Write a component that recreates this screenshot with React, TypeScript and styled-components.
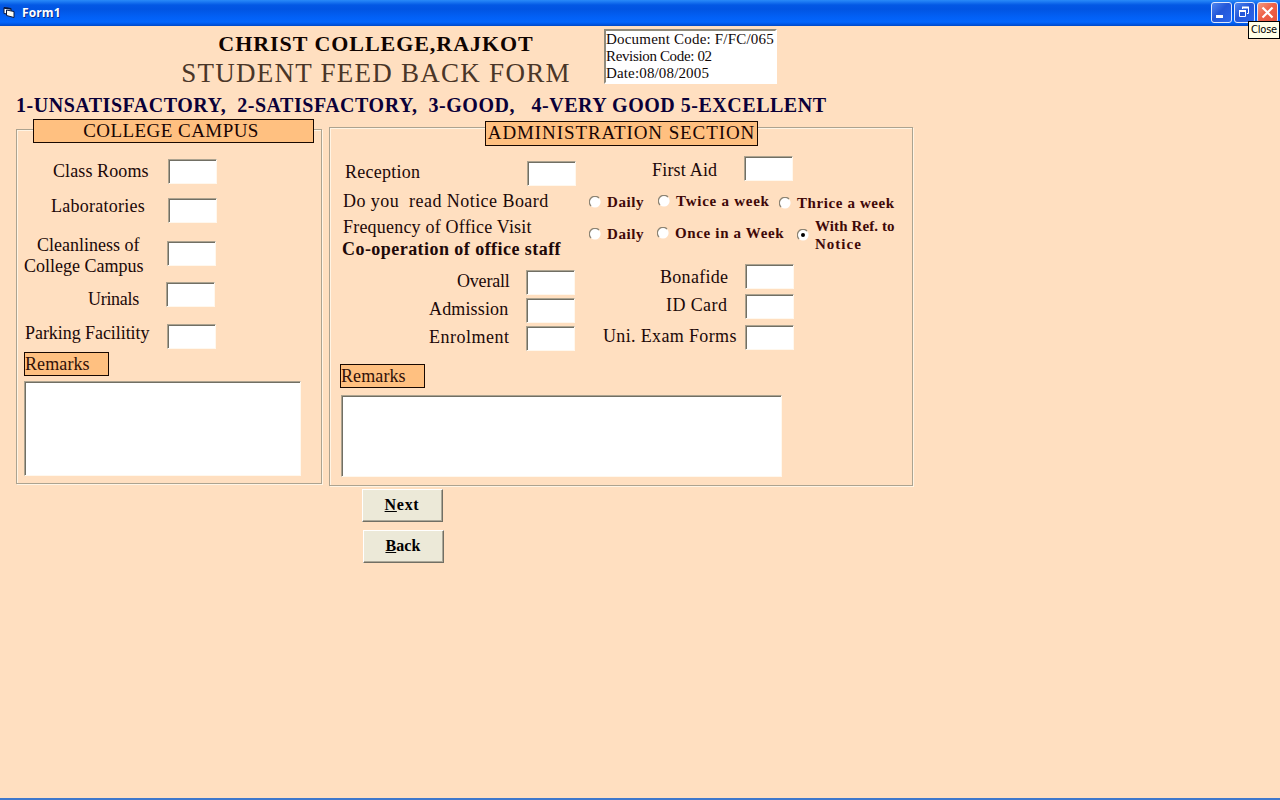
import React from "react";
import styled, { createGlobalStyle } from "styled-components";

const Global = createGlobalStyle`
  * { box-sizing: border-box; }
  body { margin: 0; background: #ffdfc0; font-family: "Liberation Serif", "Times New Roman", serif; }
`;

const Window = styled.div`
  width: 1280px;
  height: 800px;
  overflow: hidden;
  display: flex;
  flex-direction: column;
  background: #ffdfc0;
  border-bottom: 2px solid #3f78cc;
`;

const TitleBar = styled.header`
  position: relative;
  flex: none;
  height: 26px;
  display: flex;
  align-items: flex-start;
  padding: 2px 2px 0 3px;
  background: linear-gradient(#2a8af8 0, #1a77f2 2px, #0358e4 5px, #0154e2 9px, #0260f6 17px, #0366fd 22px, #0058e8 24px, #0048c4 26px);
`;

const AppIcon = styled.svg`
  margin-top: 4px;
`;

const Caption = styled.span`
  flex: 1;
  margin-left: 5px;
  font: bold 12px/22px "Open Sans", sans-serif;
  letter-spacing: 0.1px;
  color: #fff;
  text-shadow: 1px 1px 0 #0a2f8c;
`;

const WindowButtons = styled.div`
  display: flex;
  gap: 2px;
`;

const WindowButton = styled.button<{ $danger?: boolean }>`
  width: 21px;
  height: 21px;
  padding: 0;
  display: flex;
  border: 1px solid #dfe8fb;
  border-radius: 3px;
  background: ${(p) =>
    p.$danger
      ? "linear-gradient(135deg, #f09a80, #ee6248 45%, #e5533c)"
      : "linear-gradient(135deg, #4f86f0, #2457d8 45%, #2a66ec)"};
`;

const Tooltip = styled.div`
  position: absolute;
  top: 21px;
  right: 0;
  width: 32px;
  height: 18px;
  border: 1px solid #000;
  background: #ffffe8;
  color: #000;
  font: 11px/16px "DejaVu Sans Condensed", "DejaVu Sans", sans-serif;
  letter-spacing: -0.2px;
  text-align: center;
  white-space: nowrap;
`;

const Header = styled.div`
  flex: none;
  height: 67px;
  display: flex;
  align-items: flex-start;
`;

const Titles = styled.div`
  width: 390px;
  margin: 5px 0 0 181px;
  display: flex;
  flex-direction: column;
  align-items: center;
  white-space: nowrap;
`;

const College = styled.h1`
  margin: 0;
  font-size: 22px;
  line-height: 26px;
  letter-spacing: 0.95px;
  color: #100400;
`;

const FormTitle = styled.h2`
  margin: 1px 0 0;
  font-size: 27px;
  font-weight: 400;
  line-height: 30px;
  letter-spacing: 1.25px;
  color: #4a3628;
`;

const DocumentBox = styled.div`
  width: 173px;
  height: 55px;
  margin: 3px 0 0 33px;
  border: 2px solid;
  border-color: #8f8a7c #fff #fff #8f8a7c;
  background: #fff;
  font-size: 15px;
  line-height: 17px;
  color: #100808;
  white-space: nowrap;
`;

const DocumentLine = styled.div<{ $spacing: number }>`
  letter-spacing: ${(p) => p.$spacing}px;
`;

const Scale = styled.div`
  flex: none;
  height: 24px;
  padding-left: 16px;
  font-size: 20px;
  font-weight: 700;
  line-height: 24px;
  letter-spacing: 0.52px;
  color: #0a0038;
  white-space: pre;
`;

const Panels = styled.main`
  flex: none;
  height: 372px;
  display: flex;
  align-items: flex-start;
  padding-left: 16px;
  gap: 7px;
`;

const Panel = styled.section<{ $w: number; $h: number; $top: number }>`
  width: ${(p) => p.$w}px;
  height: ${(p) => p.$h}px;
  margin-top: ${(p) => p.$top}px;
  border: 1px solid #aca390;
  box-shadow: 1px 1px 0 #fff4e4, inset 1px 1px 0 #fff4e4;
`;

const Legend = styled.h3<{
  $w: number;
  $h: number;
  $x: number;
  $top: number;
  $spacing: number;
  $padRight?: number;
}>`
  width: ${(p) => p.$w}px;
  height: ${(p) => p.$h}px;
  margin: ${(p) => p.$top}px 0 0 ${(p) => p.$x}px;
  padding-right: ${(p) => p.$padRight ?? 0}px;
  border: 1px solid #180800;
  background: #ffc080;
  font-size: 19px;
  font-weight: 400;
  line-height: 21px;
  letter-spacing: ${(p) => p.$spacing}px;
  text-align: center;
  white-space: nowrap;
  color: #180404;
`;

const Row = styled.div<{ $h: number; $top?: number }>`
  display: flex;
  align-items: flex-start;
  height: ${(p) => p.$h}px;
  margin-top: ${(p) => p.$top ?? 0}px;
`;

const Column = styled.div<{ $w: number; $top?: number }>`
  width: ${(p) => p.$w}px;
  padding-top: ${(p) => p.$top ?? 0}px;
`;

const Label = styled.label<{
  $w: number;
  $x: number;
  $dy?: number;
  $spacing?: number;
  $bold?: boolean;
}>`
  flex: none;
  display: block;
  width: ${(p) => p.$w}px;
  padding-left: ${(p) => p.$x}px;
  margin-top: ${(p) => p.$dy ?? 0}px;
  font-size: 18px;
  font-weight: ${(p) => (p.$bold ? 700 : 400)};
  line-height: 20px;
  letter-spacing: ${(p) => p.$spacing ?? 0}px;
  color: #200808;
  white-space: pre;
`;

const LabelLines = styled(Label)`
  line-height: 21px;
`;

const Indent = styled.span<{ $x: number }>`
  display: inline-block;
  padding-left: ${(p) => p.$x}px;
`;

const sunken = `
  padding: 0;
  border: 1px solid;
  border-color: #aca390 #fff8ee #fff8ee #aca390;
  border-radius: 0;
  background: #fff;
  box-shadow: inset 1px 1px 0 #716f64;
  outline: none;
`;

const Field = styled.input<{ $x?: number; $dy?: number }>`
  flex: none;
  display: block;
  width: 49px;
  height: 25px;
  margin: ${(p) => p.$dy ?? 0}px 0 0 ${(p) => p.$x ?? 0}px;
  ${sunken}
`;

const Memo = styled.textarea<{ $w: number; $h: number; $x: number; $top: number }>`
  display: block;
  resize: none;
  width: ${(p) => p.$w}px;
  height: ${(p) => p.$h}px;
  margin: ${(p) => p.$top}px 0 0 ${(p) => p.$x}px;
  ${sunken}
`;

const RemarksTag = styled.div<{ $x: number }>`
  width: 85px;
  height: 24px;
  margin-left: ${(p) => p.$x}px;
  border: 1px solid #180800;
  background: #ffc080;
  font-size: 18px;
  line-height: 22px;
  letter-spacing: 0.1px;
  color: #301008;
`;

const Option = styled.label<{ $dy?: number; $spacing?: number }>`
  flex: none;
  display: flex;
  align-items: center;
  gap: 6px;
  margin-top: ${(p) => p.$dy ?? 0}px;
  font-size: 15px;
  font-weight: 700;
  line-height: 18px;
  letter-spacing: ${(p) => p.$spacing ?? 0.6}px;
  color: #400808;
  white-space: nowrap;
`;

const OptionBox = styled.div<{ $w: number }>`
  width: ${(p) => p.$w}px;
  flex: none;
`;

const Wide = styled.span`
  letter-spacing: 1px;
`;

const Dot = styled.svg`
  flex: none;
`;

const Radio = ({ checked }: { checked?: boolean }) => (
  <Dot width="12" height="12" viewBox="0 0 12 12">
    <circle cx="6" cy="6" r="5.6" fill="#fff" />
    <path d="M2 10A5.6 5.6 0 0 1 10 2" fill="none" stroke="#8c8474" strokeWidth="1.3" />
    {checked && <circle cx="6" cy="6" r="2" fill="#000" />}
  </Dot>
);

const Actions = styled.div`
  display: flex;
  flex-direction: column;
  gap: 8px;
  padding-left: 362px;
`;

const Button = styled.button<{ $x?: number; $spacing: number }>`
  width: 81px;
  height: 33px;
  margin: 0 0 0 ${(p) => p.$x ?? 0}px;
  padding: 0 1px 1px 0;
  border: 1px solid;
  border-color: #fff #716f64 #716f64 #fff;
  box-shadow: inset -1px -1px 0 #aca899;
  background: #ece9d8;
  font: bold 16px/30px "Liberation Serif", "Times New Roman", serif;
  letter-spacing: ${(p) => p.$spacing}px;
  color: #000;
`;

export default function App() {
  return (
    <>
      <Global />
      <Window>
        <TitleBar>
          <AppIcon width="14" height="14" viewBox="0 0 14 14">
            <path d="M1 1.500l7 1v6l-7-1z" fill="#fff" stroke="#0a1840" />
            <path d="M3.500 4l7.500 1.500v6L3.500 9.500z" fill="#fbfbf4" stroke="#0a1840" />
            <path d="M1 2l7 1" stroke="#0a1840" strokeWidth="1.500" />
          </AppIcon>
          <Caption>Form1</Caption>
          <WindowButtons>
            <WindowButton aria-label="Minimize">
              <svg width="19" height="19" viewBox="0 0 19 19">
                <path d="M4 13.500h7" stroke="#fff" strokeWidth="3" />
              </svg>
            </WindowButton>
            <WindowButton aria-label="Restore">
              <svg width="19" height="19" viewBox="0 0 19 19" fill="none" stroke="#fff">
                <path d="M7.500 6V4.500h6v6H12" />
                <path d="M7 4.500h7" strokeWidth="2" />
                <path d="M4.500 8.500h6v5h-6z" />
                <path d="M4 8h7" strokeWidth="2" />
              </svg>
            </WindowButton>
            <WindowButton $danger aria-label="Close window">
              <svg width="19" height="19" viewBox="0 0 19 19">
                <path d="M4.500 4.500l10 10M14.500 4.500l-10 10" stroke="#fff" strokeWidth="2.200" />
              </svg>
            </WindowButton>
          </WindowButtons>
          <Tooltip>Close</Tooltip>
        </TitleBar>

        <Header>
          <Titles>
            <College>CHRIST COLLEGE,RAJKOT</College>
            <FormTitle>STUDENT FEED BACK FORM</FormTitle>
          </Titles>
          <DocumentBox>
            <DocumentLine $spacing={0.2}>Document Code: F/FC/065</DocumentLine>
            <DocumentLine $spacing={-0.35}>Revision Code: 02</DocumentLine>
            <DocumentLine $spacing={0.15}>Date:08/08/2005</DocumentLine>
          </DocumentBox>
        </Header>

        <Scale>{"1-UNSATISFACTORY,  2-SATISFACTORY,  3-GOOD,   4-VERY GOOD 5-EXCELLENT"}</Scale>

        <Panels>
          <Panel $w={306} $h={355} $top={12}>
            <Legend $w={281} $h={24} $x={16} $top={-11} $spacing={0.45} $padRight={5}>
              COLLEGE CAMPUS
            </Legend>
            <Row $h={36} $top={16}>
              <Label $w={149} $x={36} $dy={2} $spacing={0.1}>Class Rooms</Label>
              <Field $x={2} />
            </Row>
            <Row $h={40}>
              <Label $w={149} $x={34} $dy={1} $spacing={0.25}>Laboratories</Label>
              <Field $x={2} $dy={3} />
            </Row>
            <Row $h={47}>
              <LabelLines $w={149} $x={7}>
                <Indent $x={13}>Cleanliness of</Indent>
                {"\nCollege Campus"}
              </LabelLines>
              <Field $x={1} $dy={6} />
            </Row>
            <Row $h={41}>
              <Label $w={149} $x={71} $dy={7} $spacing={-0.3}>Urinals</Label>
              <Field />
            </Row>
            <Row $h={29}>
              <Label $w={149} $x={8} $spacing={-0.06}>Parking Facilitity</Label>
              <Field $x={1} $dy={1} />
            </Row>
            <RemarksTag $x={7}>Remarks</RemarksTag>
            <Memo $w={277} $h={95} $x={7} $top={5} />
          </Panel>

          <Panel $w={584} $h={359} $top={10}>
            <Legend $w={273} $h={25} $x={155} $top={-7} $spacing={0.9}>
              ADMINISTRATION SECTION
            </Legend>
            <Row $h={35} $top={10}>
              <Label $w={197} $x={15} $dy={6} $spacing={0.25}>Reception</Label>
              <Field $dy={5} />
              <Label $w={168} $x={76} $dy={4} $spacing={0.2}>First Aid</Label>
              <Field />
            </Row>
            <Row $h={73}>
              <Column $w={259}>
                <Row $h={26}>
                  <Label $w={259} $x={13} $spacing={0.45}>{"Do you  read Notice Board"}</Label>
                </Row>
                <Row $h={22}>
                  <Label $w={259} $x={13} $spacing={0.2}>Frequency of Office Visit</Label>
                </Row>
                <Row $h={20}>
                  <Label $w={259} $x={12} $spacing={0.45} $bold>Co-operation of office staff</Label>
                </Row>
              </Column>
              <Column $w={320}>
                <Row $h={26}>
                  <OptionBox $w={69}>
                    <Option $dy={2}><Radio />Daily</Option>
                  </OptionBox>
                  <OptionBox $w={121}>
                    <Option $dy={1} $spacing={0.75}><Radio />Twice a week</Option>
                  </OptionBox>
                  <Option $dy={3}><Radio />Thrice a week</Option>
                </Row>
                <Row $h={36}>
                  <OptionBox $w={68}>
                    <Option $dy={8}><Radio />Daily</Option>
                  </OptionBox>
                  <OptionBox $w={140}>
                    <Option $dy={7} $spacing={0.65}><Radio />Once in a Week</Option>
                  </OptionBox>
                  <Option $spacing={0.1}>
                    <Radio checked />
                    <span>With Ref. to<br /><Wide>Notice</Wide></span>
                  </Option>
                </Row>
              </Column>
            </Row>
            <Row $h={100}>
              <Column $w={245} $top={6}>
                <Row $h={28}>
                  <Label $w={196} $x={127} $dy={1} $spacing={-0.2}>Overall</Label>
                  <Field />
                </Row>
                <Row $h={28}>
                  <Label $w={196} $x={99} $dy={1} $spacing={0.15}>Admission</Label>
                  <Field />
                </Row>
                <Row $h={28}>
                  <Label $w={196} $x={99} $dy={1} $spacing={0.5}>Enrolment</Label>
                  <Field />
                </Row>
              </Column>
              <Column $w={220}>
                <Row $h={30}>
                  <Label $w={170} $x={85} $dy={3} $spacing={0.3}>Bonafide</Label>
                  <Field />
                </Row>
                <Row $h={31}>
                  <Label $w={170} $x={91} $dy={1} $spacing={0.4}>ID Card</Label>
                  <Field />
                </Row>
                <Row $h={30}>
                  <Label $w={170} $x={28} $dy={1} $spacing={0.35}>Uni. Exam Forms</Label>
                  <Field />
                </Row>
              </Column>
            </Row>
            <RemarksTag $x={10}>Remarks</RemarksTag>
            <Memo $w={441} $h={82} $x={11} $top={7} />
          </Panel>
        </Panels>

        <Actions>
          <Button $spacing={0.7}><u>N</u>ext</Button>
          <Button $x={1} $spacing={0.1}><u>B</u>ack</Button>
        </Actions>
      </Window>
    </>
  );
}
